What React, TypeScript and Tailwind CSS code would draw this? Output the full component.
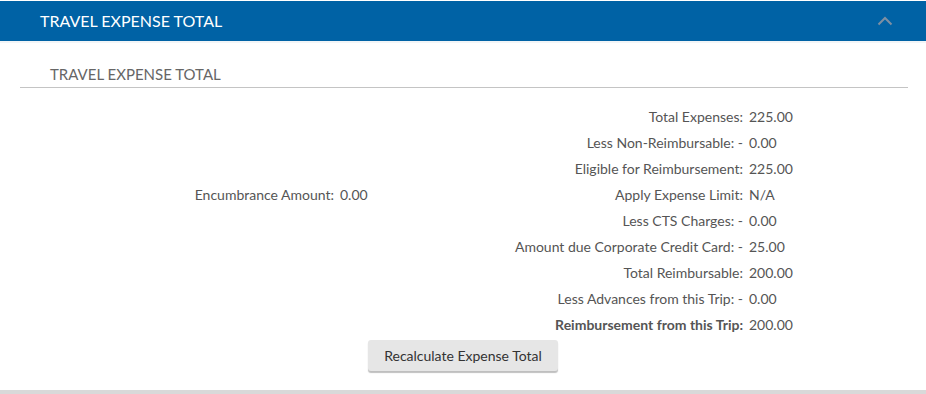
import React from 'react'

const rows: { label: string; value: string; bold?: boolean }[] = [
  { label: 'Total Expenses:', value: '225.00' },
  { label: 'Less Non-Reimbursable: -', value: '0.00' },
  { label: 'Eligible for Reimbursement:', value: '225.00' },
  { label: 'Apply Expense Limit:', value: 'N/A' },
  { label: 'Less CTS Charges: -', value: '0.00' },
  { label: 'Amount due Corporate Credit Card: -', value: '25.00' },
  { label: 'Total Reimbursable:', value: '200.00' },
  { label: 'Less Advances from this Trip: -', value: '0.00' },
  { label: 'Reimbursement from this Trip:', value: '200.00', bold: true },
]

export default function App() {
  return (
    <div className="w-[926px] h-[394px] bg-white font-['Lato','Open_Sans',sans-serif] text-[#555] overflow-hidden">
      <div className="pt-px">
        <div className="h-[40px] bg-[#0062a5] flex items-center justify-between pl-[40px] pr-[33px]">
          <span className="text-white text-[16px]">TRAVEL EXPENSE TOTAL</span>
          <svg width="16" height="10" viewBox="0 0 16 10" fill="none">
            <path d="M1.5 8.5 L8 2 L14.5 8.5" stroke="#7d8fa3" strokeWidth="2" />
          </svg>
        </div>
        <div className="h-[2px] bg-[#f2f5f7]" />
      </div>

      <div className="px-[20px] pr-[18px]">
        <div className="border-b border-[#c4c4c4] pl-[30px] pt-[23px] pb-[4px] text-[15px] text-[#666] leading-[17px]">
          TRAVEL EXPENSE TOTAL
        </div>
      </div>

      <div className="pt-[16px] flex items-start">
        <div className="w-[420px] pt-[78px] flex text-[14px] leading-[26px]">
          <span className="w-[334px] text-right">Encumbrance Amount:</span>
          <span className="pl-[6px]">0.00</span>
        </div>
        <div className="grid grid-cols-[323px_auto] text-[14px]">
          {rows.map((r) => (
            <React.Fragment key={r.label}>
              <span className={`h-[26px] leading-[26px] text-right whitespace-nowrap ${r.bold ? 'font-bold' : ''}`}>{r.label}</span>
              <span className="h-[26px] leading-[26px] pl-[6px]">{r.value}</span>
            </React.Fragment>
          ))}
        </div>
      </div>

      <div className="flex justify-center pt-[2px]">
        <button className="w-[190px] h-[31px] bg-[#e6e6e6] rounded-[3px] shadow-[0_2px_1px_rgba(0,0,0,0.25)] text-[14px] text-[#333]">
          Recalculate Expense Total
        </button>
      </div>

      <div className="mt-[19px] h-[4px] bg-[#d9d9d9]" />
    </div>
  )
}
